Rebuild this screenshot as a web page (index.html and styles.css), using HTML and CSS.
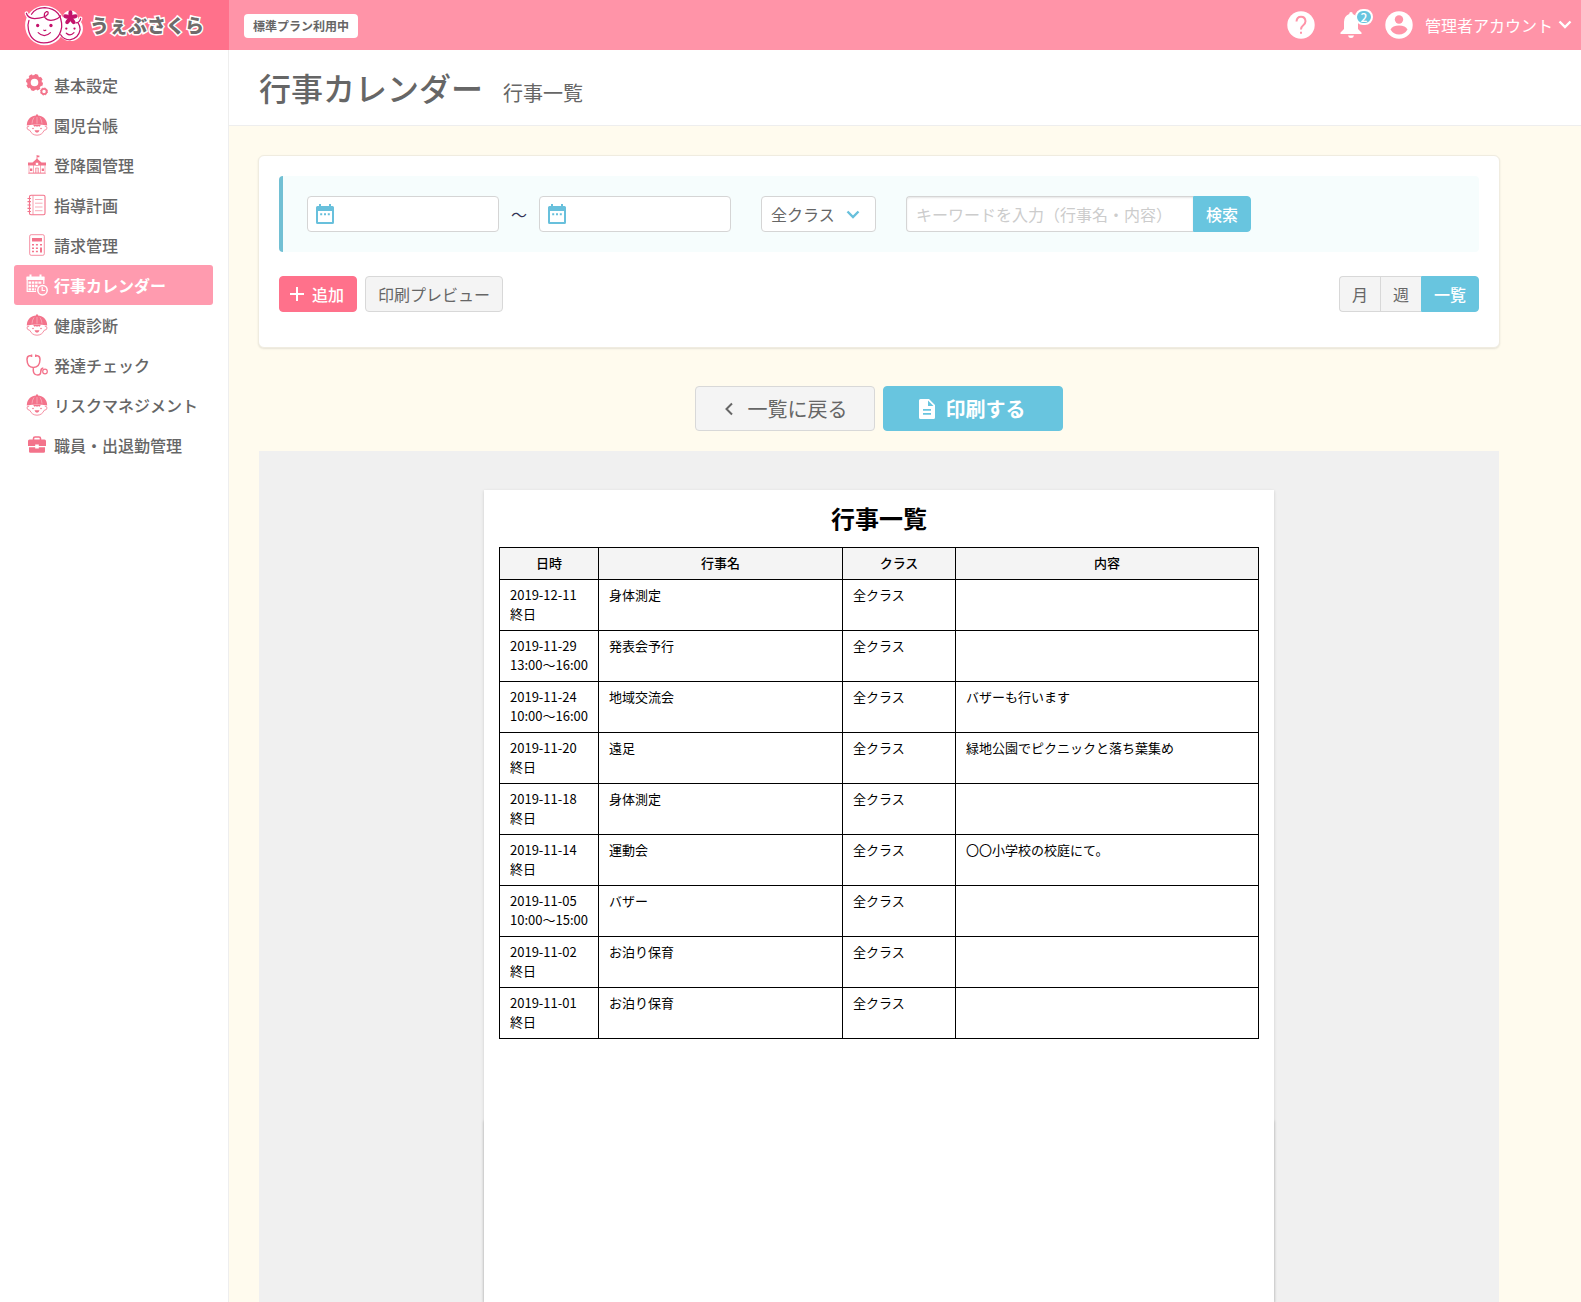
FILE: index.html
```html
<!DOCTYPE html>
<html lang="ja">
<head>
<meta charset="utf-8">
<meta name="viewport" content="width=device-width, initial-scale=1">
<title>行事カレンダー 行事一覧 | うぇぶさくら</title>
<link rel="stylesheet" href="styles.css">
</head>
<body>
<svg class="sprite" aria-hidden="true">
  <symbol id="i-gear" viewBox="0 0 22 22">
    <circle cx="8.500" cy="8.500" r="5.600" fill="none" stroke="currentColor" stroke-width="3.600"/>
    <circle cx="8.500" cy="8.500" r="7.400" fill="none" stroke="currentColor" stroke-width="2.200" stroke-dasharray="3.400 2.410"/>
    <circle cx="18" cy="17.500" r="2.600" fill="none" stroke="currentColor" stroke-width="1.700"/>
    <circle cx="18" cy="17.500" r="3.500" fill="none" stroke="currentColor" stroke-width="1" stroke-dasharray="1.570 1.170"/>
  </symbol>
  <symbol id="i-child" viewBox="0 0 22 22">
    <path d="M.8 11.500C1 5 5.500 1.600 10 1.600V.6h2v1C16.500 1.600 21 5 21.200 11.500Q11 9.300.8 11.500Z" fill="currentColor"/>
    <path d="M11 3v6.500M8 3.500Q6.200 6 6 9.500M14 3.500Q15.800 6 16 9.500" fill="none" stroke="#fff" stroke-width=".35"/>
    <path d="M3.200 12.200Q.8 12 1 14t2.800 2.300Q6 21.200 11 21.200t7.200-4.900Q21 16 21 14t-2.200-1.800" fill="none" stroke="currentColor" stroke-width=".8"/>
    <path d="M7 10.800h8l-1.500 2-1.500-.9-1 1-1-1-1.500.9z" fill="currentColor"/>
    <circle cx="7" cy="14.500" r=".8" fill="currentColor"/><circle cx="15" cy="14.500" r=".8" fill="currentColor"/>
    <path d="M8.500 16.300h5Q13 18.700 11 18.700t-2.500-2.400z" fill="currentColor"/>
  </symbol>
  <symbol id="i-school" viewBox="0 0 22 22">
    <path d="M10.600 1h.8v5h-.8zM11.400 1.500h2v1.800h-2z" fill="currentColor"/>
    <path d="M2 8.500h4.500L11 4.500l4.500 4H20v3H2z" fill="currentColor"/>
    <path d="M3 11.500v7.500h16v-7.500M7.500 10v9M14.500 10v9M2 19.300h18" fill="none" stroke="currentColor" stroke-width=".6"/>
    <circle cx="11" cy="10" r="1.700" fill="#fff" stroke="currentColor" stroke-width=".6"/>
    <path d="M4 14.500h2.300v2.500H4zM15.700 14.500H18v2.500h-2.300z" fill="currentColor"/>
    <path d="M9.500 19v-5h3v5M11 14v5" fill="none" stroke="currentColor" stroke-width=".6"/>
  </symbol>
  <symbol id="i-note" viewBox="0 0 22 22">
    <rect x="3.500" y="1.200" width="15.500" height="19.600" rx="1.500" fill="none" stroke="currentColor" stroke-width="1.100"/>
    <path d="M7 1.500v19" stroke="currentColor" stroke-width=".7"/>
    <path d="M1.500 4.500H5M1.500 7.700H5M1.500 11H5M1.500 14.300H5M1.500 17.500H5" stroke="currentColor" stroke-width="1.200"/>
    <path d="M9 5.500h7.500M9 9.200h7.500M9 13h7.500M9 16.700h7.500" stroke="currentColor" stroke-width=".6"/>
  </symbol>
  <symbol id="i-calc" viewBox="0 0 22 22">
    <rect x="3.700" y=".7" width="14.600" height="20.600" rx="1.500" fill="none" stroke="currentColor" stroke-width=".8"/>
    <path d="M6 4h10v3.500H6z" fill="currentColor"/>
    <path d="M6 10.800h2M9.900 10.800h2M6 14.200h2M9.900 14.200h2M6 17.500h2M9.900 17.500h2M14 10.800h2" stroke="currentColor" stroke-width="1.600"/>
    <path d="M14 13.400h2v5h-2z" fill="currentColor"/>
  </symbol>
  <symbol id="i-event" viewBox="0 0 22 22">
    <path d="M1.200 3v14.500H10M17.800 3v7" fill="none" stroke="currentColor" stroke-width="1.200"/>
    <path d="M.6 2.500h17.800v3.500H.6zM3.500.5h2v3h-2zM13.500.5h2v3h-2z" fill="currentColor"/>
    <path d="M2.500 8.700H16M2.500 12H12M2.500 15.300H10" stroke="currentColor" stroke-width="2.300" stroke-dasharray="2.500 .8"/>
    <circle cx="16.500" cy="16.200" r="4.700" fill="#ff9baf" stroke="currentColor" stroke-width="1.500"/>
    <path d="M16.200 13v3.500H19" fill="none" stroke="currentColor" stroke-width="1.200"/>
  </symbol>
  <symbol id="i-steth" viewBox="0 0 22 22">
    <path d="M5.500 1.700H3.500Q1 2 1 5.500 1.200 13.300 7.300 13.500 13.800 13.300 14 5.500q0-3.500-2.500-3.800H10M7.300 13.500V17q.5 4 4.500 4 3 0 3-3.500 0-3 2.500-3.500" fill="none" stroke="currentColor" stroke-width="1.500"/>
    <path d="M4.800.5h1.500v2.400H4.800zM9 .5h1.500v2.400H9z" fill="currentColor"/>
    <circle cx="19" cy="17.500" r="2.300" fill="#fff" stroke="currentColor" stroke-width="1.200"/>
  </symbol>
  <symbol id="i-bag" viewBox="0 0 22 22">
    <path d="M7.500 6V4.500Q7.500 3 9 3h4q1.500 0 1.500 1.500V6" fill="none" stroke="currentColor" stroke-width="1.600"/>
    <path d="M3.500 5.500h15Q20 5.500 20 7v5h-7.200v-1.500H9.200V12H2V7q0-1.500 1.500-1.500zM3 13.200h6.200v1.300h3.600v-1.300H19v4.300q0 1.300-1.300 1.300H4.300Q3 18.800 3 17.500z" fill="currentColor"/>
  </symbol>
  <symbol id="i-date" viewBox="0 0 20 22">
    <path d="M4 1h2v2h8V1h2v2h1.500Q19 3 19 4.500v15Q19 21 17.500 21h-15Q1 21 1 19.500v-15Q1 3 2.500 3H4zM3 8v11h14V8z" fill="currentColor"/>
    <path d="M5.200 10.200h2v2h-2zM9 10.200h2v2H9zM12.800 10.200h2v2h-2z" fill="currentColor"/>
  </symbol>
  <symbol id="i-down" viewBox="0 0 14 10">
    <path d="M1.500 1.500L7 7l5.500-5.500" fill="none" stroke="currentColor" stroke-width="2.400"/>
  </symbol>
</svg>

<header class="topbar">
  <a class="brand" href="#">
    <svg class="brand-mark" viewBox="0 0 58 42" aria-hidden="true">
      <g fill="#fff" stroke="#fff" stroke-width="3.500" stroke-linecap="round" stroke-linejoin="round">
        <circle cx="21" cy="21" r="17.500"/><circle cx="46" cy="24" r="10.500"/><circle cx="46" cy="14" r="6"/>
        <path d="M3 9q2 5 6 5M56 14q-1 4-4 5" fill="none"/>
      </g>
      <g fill="none" stroke="#c4126b" stroke-width="1.200" stroke-linecap="round">
        <path d="M5.500 16Q4 20 5 25q2.500 12.500 15 13 15-.5 17.500-15.500Q38 5 21 3.500 12 3.500 8 10"/>
        <path d="M3 9q1.500 5 8 5.200 10-.2 13-4.200 1-3-1.500-2.500-3 1.500-1.500 5.500 3 4 9 2.500 4-1 6.500-4"/>
        <path d="M36.500 30q3 5 9 5 8.500-1.500 10-10 0-3.500-2-6.500M56 14q-1 4-4.500 4.500"/>
        <path d="M14.500 28q6 6 12 0M42 28.500q4 3.500 7.500-.5M20 25.500q1 1.200 2 0"/>
      </g>
      <g fill="#c4126b"><circle cx="14" cy="21" r="1.600"/><circle cx="27" cy="21" r="1.600"/><circle cx="42" cy="24" r="1.100"/><circle cx="50" cy="24" r="1.100"/>
        <ellipse cx="46" cy="9.500" rx="2" ry="3.300"/><ellipse cx="46" cy="9.500" rx="2" ry="3.300" transform="rotate(72 46 13.500)"/><ellipse cx="46" cy="9.500" rx="2" ry="3.300" transform="rotate(144 46 13.500)"/><ellipse cx="46" cy="9.500" rx="2" ry="3.300" transform="rotate(216 46 13.500)"/><ellipse cx="46" cy="9.500" rx="2" ry="3.300" transform="rotate(288 46 13.500)"/><circle cx="46" cy="13.500" r="2.500"/></g>
    </svg>
    <span class="brand-name">うぇぶさくら</span>
  </a>
  <div class="topbar-main">
    <span class="plan">標準プラン利用中</span>
    <nav class="tools" aria-label="アカウント">
      <a class="tool" href="#" aria-label="ヘルプ">
        <svg width="28" height="28" viewBox="0 0 28 28"><circle cx="14" cy="14" r="13.700" fill="#fff"/><path d="M9.500 10.500q.3-4.800 4.500-4.800t4.500 4.500q0 2.300-2.500 4.300-2 1.500-2 4" fill="none" stroke="#ff94a8" stroke-width="2"/><path d="M13 20.700h2v2h-2z" fill="#ff94a8"/></svg>
      </a>
      <a class="tool bell" href="#" aria-label="お知らせ">
        <svg width="24" height="28" viewBox="0 0 24 28"><path d="M12 1q1.800 0 1.800 2Q19 5 19 11v7l3.500 3.500V23h-21v-1.500L5 18v-7q0-6 5.200-8Q10.200 1 12 1zM9 24.500h6Q14.500 27 12 27t-3-2.500z" fill="#fff"/></svg>
        <span class="badge">2</span>
      </a>
      <button class="account" type="button">
        <svg width="28" height="28" viewBox="0 0 28 28" aria-hidden="true"><circle cx="14" cy="14" r="13.700" fill="#fff"/><circle cx="14" cy="8.500" r="4.200" fill="#ff94a8"/><path d="M5.500 18.500q2-4 8.500-4t8.500 4q-3 5-8.500 5t-8.500-5z" fill="#ff94a8"/></svg>
        <span>管理者アカウント</span>
        <svg class="chev" aria-hidden="true"><use href="#i-down"/></svg>
      </button>
    </nav>
  </div>
</header>

<div class="layout">
  <nav class="sidebar" aria-label="メニュー">
    <a href="#"><svg><use href="#i-gear"/></svg>基本設定</a>
    <a href="#"><svg><use href="#i-child"/></svg>園児台帳</a>
    <a href="#"><svg><use href="#i-school"/></svg>登降園管理</a>
    <a href="#"><svg><use href="#i-note"/></svg>指導計画</a>
    <a href="#"><svg><use href="#i-calc"/></svg>請求管理</a>
    <a class="active" href="#" aria-current="page"><svg><use href="#i-event"/></svg>行事カレンダー</a>
    <a href="#"><svg><use href="#i-child"/></svg>健康診断</a>
    <a href="#"><svg><use href="#i-steth"/></svg>発達チェック</a>
    <a href="#"><svg><use href="#i-child"/></svg>リスクマネジメント</a>
    <a href="#"><svg><use href="#i-bag"/></svg>職員・出退勤管理</a>
  </nav>

  <main class="main">
    <div class="page-head">
      <h1>行事カレンダー</h1>
      <p>行事一覧</p>
    </div>
    <div class="content">
      <section class="card">
        <form class="filter">
          <label class="date"><svg aria-hidden="true"><use href="#i-date"/></svg><input type="text" aria-label="開始日"></label>
          <span class="tilde">～</span>
          <label class="date"><svg aria-hidden="true"><use href="#i-date"/></svg><input type="text" aria-label="終了日"></label>
          <div class="select">
            <select aria-label="クラス"><option>全クラス</option></select>
            <svg aria-hidden="true"><use href="#i-down"/></svg>
          </div>
          <div class="search">
            <input type="text" aria-label="キーワード" placeholder="キーワードを入力（行事名・内容）">
            <button class="btn blue" type="button">検索</button>
          </div>
        </form>
        <div class="actions">
          <button class="btn pink" type="button"><svg width="16" height="16" viewBox="0 0 16 16" aria-hidden="true"><path d="M8 1v14M1 8h14" stroke="currentColor" stroke-width="2"/></svg>追加</button>
          <button class="btn" type="button">印刷プレビュー</button>
          <div class="views">
            <button class="btn" type="button">月</button>
            <button class="btn" type="button">週</button>
            <button class="btn blue" type="button">一覧</button>
          </div>
        </div>
      </section>

      <div class="print-actions">
        <button class="btn large" type="button"><svg width="20" height="20" viewBox="0 0 20 20" aria-hidden="true"><path d="M13 4.500L7.500 10l5.500 5.500" fill="none" stroke="currentColor" stroke-width="2"/></svg>一覧に戻る</button>
        <button class="btn blue large" type="button"><svg width="20" height="20" viewBox="0 0 20 20" aria-hidden="true"><path d="M3.500 0H12l6 6v12.500Q18 20 16.500 20h-13Q2 20 2 18.500v-17Q2 0 3.500 0zM11 1.500V7h5.500zM6 10v1.800h8V10zM6 14v1.800h8V14z" fill="currentColor" fill-rule="evenodd"/></svg>印刷する</button>
      </div>

      <section class="preview">
        <article class="paper">
          <h2>行事一覧</h2>
          <table>
            <colgroup><col class="c-date"><col class="c-name"><col class="c-class"><col></colgroup>
            <thead><tr><th>日時</th><th>行事名</th><th>クラス</th><th>内容</th></tr></thead>
            <tbody>
              <tr><td>2019-12-11<br>終日</td><td>身体測定</td><td>全クラス</td><td></td></tr>
              <tr><td>2019-11-29<br>13:00～16:00</td><td>発表会予行</td><td>全クラス</td><td></td></tr>
              <tr><td>2019-11-24<br>10:00～16:00</td><td>地域交流会</td><td>全クラス</td><td>バザーも行います</td></tr>
              <tr><td>2019-11-20<br>終日</td><td>遠足</td><td>全クラス</td><td>緑地公園でピクニックと落ち葉集め</td></tr>
              <tr><td>2019-11-18<br>終日</td><td>身体測定</td><td>全クラス</td><td></td></tr>
              <tr><td>2019-11-14<br>終日</td><td>運動会</td><td>全クラス</td><td>〇〇小学校の校庭にて。</td></tr>
              <tr><td>2019-11-05<br>10:00～15:00</td><td>バザー</td><td>全クラス</td><td></td></tr>
              <tr><td>2019-11-02<br>終日</td><td>お泊り保育</td><td>全クラス</td><td></td></tr>
              <tr><td>2019-11-01<br>終日</td><td>お泊り保育</td><td>全クラス</td><td></td></tr>
            </tbody>
          </table>
        </article>
      </section>
    </div>
  </main>
</div>
</body>
</html>
```
FILE: styles.css
```css
* { box-sizing: border-box; }

body {
  margin: 0;
  min-height: 100vh;
  display: flex;
  flex-direction: column;
  font: 16px/24px "Noto Sans CJK JP", sans-serif;
  color: #666;
  background: #fffbee;
}

a { color: inherit; text-decoration: none; }
h1, h2, p { margin: 0; font-weight: 400; }
button, input, select { font: inherit; color: inherit; }
.sprite { position: absolute; width: 0; height: 0; }

/* top bar */
.topbar { display: flex; flex: none; height: 50px; color: #fff; background: #ff94a8; }
.brand { display: flex; align-items: center; gap: 7px; width: 229px; padding-left: 23px; background: #ff718b; }
.brand-mark { width: 60px; height: 43px; }
.brand-name {
  font-size: 19px;
  font-weight: 900;
  color: #6f6b6b;
  -webkit-text-stroke: 3px #fff;
  paint-order: stroke fill;
}
.topbar-main { display: flex; flex: 1; align-items: center; justify-content: space-between; padding: 0 9px 0 15px; }
.plan { margin-top: 2px; padding: 0 9px; border-radius: 4px; background: #fff; font-size: 12px; font-weight: 700; color: #666; }
.tools { display: flex; align-items: center; }
.tool { display: flex; position: relative; }
.bell { margin: 0 22px 0 24px; }
.badge {
  position: absolute;
  top: -2px;
  left: 16px;
  width: 18px;
  height: 16px;
  border: 2px solid #fff;
  border-radius: 8px;
  background: #68c5df;
  font-size: 12px;
  font-weight: 500;
  line-height: 12px;
  text-align: center;
}
.account { display: flex; align-items: center; gap: 12px; padding: 0; border: 0; background: none; cursor: pointer; }
.chev { width: 14px; height: 10px; margin-left: -7px; }

/* frame */
.layout { display: flex; flex: 1; }
.sidebar { flex: none; width: 229px; padding: 15px 15px 0 14px; border-right: 1px solid #eee; background: #fff; }
.sidebar a { display: flex; align-items: center; gap: 6px; height: 40px; padding-left: 12px; border-radius: 3px; font-weight: 500; white-space: nowrap; }
.sidebar svg { width: 22px; height: 22px; color: #f3738b; }
.sidebar .active { background: #ff9baf; color: #fff; font-weight: 700; }
.sidebar .active svg { color: #fff; }
.main { display: flex; flex: 1; flex-direction: column; min-width: 0; }
.page-head { display: flex; flex: none; align-items: baseline; gap: 20px; height: 76px; padding: 13px 30px 0; border-bottom: 1px solid #eee; background: #fff; }
.page-head h1 { font-size: 32px; line-height: 48px; font-weight: 500; }
.page-head p { font-size: 20px; }
.content { display: flex; flex: 1; flex-direction: column; max-width: 1300px; padding: 30px 30px 0; }

/* filter card */
.card { flex: none; margin: -1px; padding: 20px 20px 35px; border: 1px solid #f0ece0; border-radius: 6px; background: #fff; box-shadow: 0 1px 2px rgba(0, 0, 0, .1); }
.filter { display: flex; align-items: center; padding: 20px 24px; border-left: 4px solid #72c0d4; border-radius: 4px; background: #f6fdfd; }
.date { position: relative; width: 192px; }
.date svg { position: absolute; top: 7px; left: 8px; width: 20px; height: 22px; color: #68c0dc; }
.date input, .select select, .search input { width: 100%; height: 36px; border: 1px solid #d5d5d5; border-radius: 4px; background: #fff; }
.date input { display: block; padding: 0 8px 0 36px; }
.tilde { width: 40px; text-align: center; color: #335; }
.select { position: relative; width: 115px; margin: 0 30px; }
.select select { display: block; padding: 0 9px; appearance: none; }
.select svg { position: absolute; top: 14px; left: 85px; width: 14px; height: 10px; color: #68c0dc; }
.search { display: flex; width: 345px; }
.search input { flex: 1; min-width: 0; padding: 0 9px; border-right: 0; border-radius: 4px 0 0 4px; box-shadow: inset 0 1px 2px rgba(0, 0, 0, .1); }
.search input::placeholder { color: #ccc; }
.search .btn { border-radius: 0 4px 4px 0; }

.btn {
  display: inline-flex;
  align-items: center;
  justify-content: center;
  gap: 7px;
  height: 36px;
  padding: 0 12px;
  border: 1px solid #d8d8d8;
  border-radius: 4px;
  background: #f4f4f4;
  white-space: nowrap;
  cursor: pointer;
}
.btn.blue { border-color: #68c5df; background: #68c5df; color: #fff; font-weight: 500; }
.btn.pink { padding: 0 12px 0 9px; border-color: #ff718b; background: #ff718b; color: #fff; font-weight: 500; }
.btn.large { width: 180px; height: 45px; gap: 9px; padding: 0 16px 0 12px; font-size: 20px; }
.btn.blue.large { font-weight: 700; }
.actions { display: flex; gap: 8px; margin-top: 24px; }
.views { display: flex; margin-left: auto; }
.views .btn { border-right: 0; border-radius: 0; }
.views .btn:first-child { border-radius: 4px 0 0 4px; }
.views .btn:last-child { border-right: 1px solid #68c5df; border-radius: 0 4px 4px 0; }

/* print preview */
.print-actions { display: flex; flex: none; justify-content: center; gap: 8px; padding: 39px 0 20px; }
.preview { display: flex; flex: 1; justify-content: center; padding-top: 39px; background: #f0f0f0; isolation: isolate; }
.paper { position: relative; flex: 1; max-width: 790px; padding: 10px 15px; background: #fff; box-shadow: 0 1px 3px rgba(0, 0, 0, .15); color: #000; }
/* second sheet of the stack, under the first */
.paper::after { content: ""; position: absolute; z-index: -1; inset: 630px 0 0; box-shadow: 0 1px 3px rgba(0, 0, 0, .2); }
.paper h2 { font-size: 24px; line-height: 36px; font-weight: 700; text-align: center; }
.paper table { width: 100%; margin-top: 11px; border-collapse: collapse; table-layout: fixed; font-size: 13px; line-height: 19px; }
.paper th, .paper td { padding: 5px 10px 7px; border: 1px solid #000; vertical-align: top; text-align: left; }
.paper th { background: #f4f4f4; font-weight: 500; text-align: center; }
.c-date { width: 99px; }
.c-name { width: 244px; }
.c-class { width: 113px; }
```
